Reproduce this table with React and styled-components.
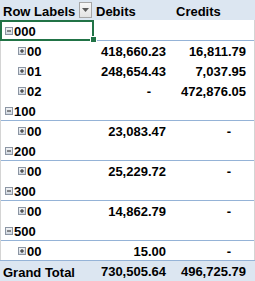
import React from 'react'
import styled, { createGlobalStyle } from 'styled-components'

const GlobalStyle = createGlobalStyle`
  html, body {
    margin: 0;
    padding: 0;
    background: #fff;
  }
  body {
    font-family: "Liberation Sans", Arial, sans-serif;
    font-weight: bold;
    font-size: 13px;
    color: #000;
  }
`

const groups = [
  {
    code: '000',
    items: [
      { code: '00', debit: '418,660.23', credit: '16,811.79' },
      { code: '01', debit: '248,654.43', credit: '7,037.95' },
      { code: '02', debit: null, credit: '472,876.05' },
    ],
  },
  { code: '100', items: [{ code: '00', debit: '23,083.47', credit: null }] },
  { code: '200', items: [{ code: '00', debit: '25,229.72', credit: null }] },
  { code: '300', items: [{ code: '00', debit: '14,862.79', credit: null }] },
  { code: '500', items: [{ code: '00', debit: '15.00', credit: null }] },
]

function ExpandBox({ open }) {
  return (
    <Toggle width="8" height="8" viewBox="0 0 8 8">
      <defs>
        <linearGradient id={open ? 'gOpen' : 'gClosed'} x1="0" y1="0" x2="0" y2="1">
          <stop offset="0" stopColor="#f4f5f7" />
          <stop offset="1" stopColor="#cfd5de" />
        </linearGradient>
      </defs>
      <rect x="0.5" y="0.5" width="7" height="7" fill={`url(#${open ? 'gOpen' : 'gClosed'})`} stroke="#8b95a3" />
      <line x1="2" y1="4" x2="6" y2="4" stroke="#262626" strokeWidth="1" />
      {!open && <line x1="4" y1="2" x2="4" y2="6" stroke="#262626" strokeWidth="1" />}
    </Toggle>
  )
}

function Amount({ value }) {
  if (!value) return <Dash>-</Dash>
  return <span>{value}</span>
}

export default function App() {
  return (
    <>
      <GlobalStyle />
      <Sheet>
        <HeaderRow>
          <HeadLabel>
            <span>Row Labels</span>
            <FilterButton>
              <svg width="7" height="4" viewBox="0 0 7 4">
                <path d="M0 0 H7 L3.5 4 Z" fill="#5a5a5a" />
              </svg>
            </FilterButton>
          </HeadLabel>
          <HeadCell>Debits</HeadCell>
          <HeadCell>Credits</HeadCell>
        </HeaderRow>

        {groups.map((g, gi) => (
          <React.Fragment key={g.code}>
            <Row>
              <LabelCell $level={1}>
                <ExpandBox open />
                <span>{g.code}</span>
                {gi === 0 && (
                  <Selection>
                    <Handle />
                  </Selection>
                )}
              </LabelCell>
              <NumCell />
              <NumCell />
            </Row>
            {g.items.map((it, i) => (
              <Row key={it.code} $topLine={i === 0}>
                <LabelCell $level={2}>
                  <ExpandBox />
                  <span>{it.code}</span>
                </LabelCell>
                <NumCell><Amount value={it.debit} /></NumCell>
                <NumCell><Amount value={it.credit} /></NumCell>
              </Row>
            ))}
          </React.Fragment>
        ))}

        <TotalRow>
          <TotalLabel>Grand Total</TotalLabel>
          <NumCell>730,505.64</NumCell>
          <NumCell>496,725.79</NumCell>
        </TotalRow>
      </Sheet>
    </>
  )
}

const Sheet = styled.div`
  width: 255px;
  display: flex;
  flex-direction: column;
`

const HeaderRow = styled.div`
  display: grid;
  grid-template-columns: 94px 80px 80px 1px;
  height: 20px;
  background: #dce6f1;
`

const HeadCell = styled.div`
  padding: 3px 0 0 2px;
  line-height: 17px;
  white-space: nowrap;
`

const HeadLabel = styled.div`
  display: flex;
  align-items: flex-start;
  justify-content: space-between;
  padding: 3px 2px 0 3px;
  line-height: 17px;
`

const FilterButton = styled.div`
  box-sizing: border-box;
  width: 13px;
  height: 16px;
  margin-top: -1px;
  border: 1px solid #a6a6a6;
  background: linear-gradient(#f7f7f7, #e3e3e3);
  display: flex;
  align-items: center;
  justify-content: center;
`

const Row = styled.div`
  box-sizing: border-box;
  display: grid;
  grid-template-columns: 93px 80px 80px;
  height: 20px;
  border-left: 1px solid #d4d4d4;
  border-right: 1px solid #d4d4d4;
  box-shadow: ${p => (p.$topLine ? 'inset 0 1px 0 #95b3d7' : 'none')};
`

const LabelCell = styled.div`
  position: relative;
  display: flex;
  align-items: flex-start;
  gap: 1px;
  padding: 3px 0 0 ${p => (p.$level === 1 ? 4 : 17)}px;
  line-height: 17px;
`

const Toggle = styled.svg`
  flex: none;
  margin-top: 4px;
`

const NumCell = styled.div`
  display: flex;
  justify-content: flex-end;
  padding: 3px 8px 0 0;
  line-height: 17px;
  white-space: nowrap;
`

const Dash = styled.span`
  margin-right: 15px;
`

const Selection = styled.div`
  position: absolute;
  left: -1px;
  top: 0;
  width: 94px;
  height: 21px;
  box-sizing: border-box;
  border: 2px solid #217346;
  pointer-events: none;
`

const Handle = styled.div`
  position: absolute;
  right: -5px;
  bottom: -4px;
  width: 7px;
  height: 7px;
  box-sizing: border-box;
  background: #217346;
  border: 1px solid #fff;
`

const TotalRow = styled.div`
  display: grid;
  grid-template-columns: 94px 80px 80px;
  height: 21px;
  background: #dce6f1;
  box-shadow: inset 0 1px 0 #95b3d7;
`

const TotalLabel = styled.div`
  padding: 4px 0 0 3px;
  line-height: 17px;
  white-space: nowrap;
`
